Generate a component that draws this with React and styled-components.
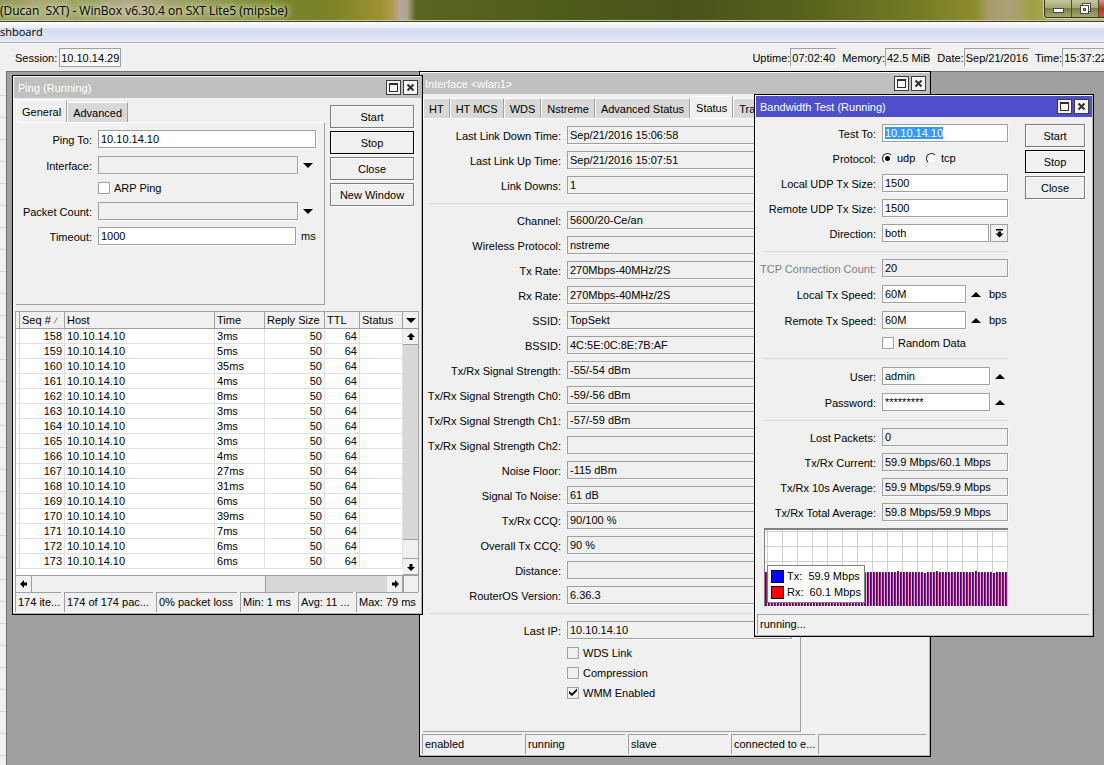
import React, { useEffect, useId, useRef } from 'react';
import styled, { createGlobalStyle, css } from 'styled-components';

const GlobalStyle = createGlobalStyle`
  * {
    box-sizing: border-box;
  }

  body {
    margin: 0;
    overflow: hidden;
    background: #a0a0a0;
  }

  body, button, input, select {
    font-family: "Liberation Sans", Arial, sans-serif;
    font-size: 11px;
    line-height: 14px;
    color: #000;
  }

  ::selection {
    background: #3399ff;
    color: #fff;
  }
`;

const Page = styled.div`
  display: flex;
  flex-direction: column;
  height: 100vh;
  overflow: hidden;
`;

const TitleBar = styled.header`
  display: flex;
  justify-content: space-between;
  flex: none;
  height: 22px;
  border-bottom: 1px solid #3c3f24;
  box-shadow: inset 0 -1px 0 #c3c9a0;
  background: linear-gradient(
    90deg,
    #8b9450 0,
    #a9a878 40px,
    #98a05c 90px,
    #b3a98a 125px,
    #939c56 200px,
    #78842c 285px,
    #7c8227 330px,
    #9c912f 380px,
    #b09a4c 392px,
    #b8a79c 400px,
    #b3a492 407px,
    #5a6420 416px,
    #4f5d1a 560px,
    #48531a 680px,
    #57611c 800px,
    #757b24 920px,
    #8d8c2c 975px,
    #a99b70 990px,
    #aba276 1010px,
    #a0a048 1030px,
    #b5b78c 100%
  );
`;

const AppTitle = styled.h1`
  margin: 0;
  font-family: "Open Sans", sans-serif;
  font-size: 12px;
  font-weight: 400;
  line-height: 21px;
  white-space: pre;
  text-shadow: 0 0 5px #e4e6c8, 0 0 8px #d8dcb4, 0 0 10px #d8dcb4;
`;

const CaptionButtons = styled.div`
  display: flex;
  width: 60px;
  height: 18px;
  overflow: hidden;
  border: 1px solid #33361c;
  border-top: 0;
  border-right: 0;
  border-bottom-left-radius: 4px;
  box-shadow: 0 0 0 1px #d3d5a8;
`;

const CaptionButton = styled.button`
  display: flex;
  align-items: center;
  justify-content: center;
  flex: none;
  width: 27px;
  padding: 0;
  border: 0;
  border-right: 1px solid #4c4e30;
  background: ${({ $close }) =>
    $close
      ? 'linear-gradient(#d8968a, #b03a24 50%, #c8583c)'
      : 'linear-gradient(#c4c69c, #a6a878 45%, #7c7f48 50%, #a3a670)'};
`;

const MenuBar = styled.nav`
  display: flex;
  flex: none;
  height: 21px;
  border-bottom: 1px solid #a3a8b5;
  background: linear-gradient(#fdfdff 0, #eceff8 30%, #d5dbee 35%, #dfe5f4 90%, #f4f5fa 100%);
`;

const MenuLink = styled.a`
  color: #000;
  font-family: "Open Sans", sans-serif;
  font-size: 11px;
  line-height: 20px;
  text-decoration: none;
`;

const Toolbar = styled.div`
  display: flex;
  align-items: center;
  justify-content: space-between;
  flex: none;
  height: 28px;
  padding-left: 15px;
  border-top: 1px solid #fff;
  background: #f0f0f0;
`;

const ToolbarGroup = styled.div`
  display: flex;
  gap: 5px;
  margin-right: ${({ $bleed }) => ($bleed ? '-5px' : 0)};
`;

const Readout = styled.div`
  display: flex;
  align-items: center;
  gap: ${({ $boxed }) => ($boxed ? '2px' : 0)};
  white-space: nowrap;
`;

const ReadoutValue = styled.output`
  height: 19px;
  padding: 1px;
  border: 1px solid #a0a0a0;
  border-right-color: ${({ $boxed }) => ($boxed ? '#a0a0a0' : '#fff')};
  border-bottom-color: ${({ $boxed }) => ($boxed ? '#a0a0a0' : '#fff')};
  background: ${({ $boxed }) => ($boxed ? '#f8f8f8' : '#f0f0f0')};
  line-height: 16px;
`;

const Workspace = styled.main`
  display: flex;
  flex: 1;
  min-height: 0;
`;

const Sidebar = styled.aside`
  flex: none;
  width: 6px;
  background: repeating-linear-gradient(#f0f0f0 0, #f0f0f0 21px, #d8d8d8 21px, #d8d8d8 22px) 0 3px;
`;

const Desktop = styled.div`
  position: relative;
  flex: 1;
  overflow: hidden;
  background: #a0a0a0;
  box-shadow: inset 1px 1px 0 #727272;
`;

const Frame = styled.section`
  position: absolute;
  left: ${({ $x }) => $x}px;
  top: ${({ $y }) => $y}px;
  display: flex;
  flex-direction: column;
  width: ${({ $width }) => $width}px;
  padding: 1px;
  border: 1px solid #000;
  background: #f0f0f0;
  box-shadow: inset -1px -1px 0 #b4b4b4, inset 1px 1px 0 #fafafa;
`;

const FrameTitle = styled.div`
  display: flex;
  align-items: center;
  gap: 2px;
  height: 21px;
  padding: 0 3px 0 4px;
  background: ${({ $active }) => ($active ? '#4f4fcc' : '#c0c0c0')};
  color: #fff;
`;

const FrameName = styled.h2`
  flex: 1;
  margin: 0;
  font-size: 11px;
  font-weight: 400;
  line-height: 16px;
`;

const FrameButton = styled.button`
  display: flex;
  align-items: center;
  justify-content: center;
  width: 15px;
  height: 15px;
  padding: 0;
  border: 1px solid #3c3c3c;
  background: #f4f4f4;
`;

const FrameBody = styled.div`
  display: flex;
  padding-left: 2px;
`;

const Main = styled.div`
  flex: 1;
  min-width: 0;
`;

const Tabs = styled.div`
  display: flex;
  align-items: flex-end;
  height: 24px;
  overflow: hidden;
`;

const Tab = styled.button`
  flex: none;
  height: ${({ $active }) => ($active ? '22px' : '20px')};
  padding: 0 5px;
  border: 1px solid #fff;
  border-width: 1px 1px 0;
  border-right-color: #a0a0a0;
  background: ${({ $active }) => ($active ? '#f0f0f0' : '#d8d8d8')};
  white-space: nowrap;
`;

const Panel = styled.div`
  min-height: ${({ $height }) => $height}px;
  padding-right: 8px;
  border: 1px solid #fff;
  border-left: 0;
  border-right-color: #a0a0a0;
  border-bottom-color: #a0a0a0;
`;

const ButtonColumn = styled.div`
  display: flex;
  flex-direction: column;
  flex: none;
  gap: 3px;
  width: ${({ $width }) => $width}px;
  padding: 7px 7px 0 ${({ $gutter }) => $gutter}px;
`;

const PushButton = styled.button`
  height: 23px;
  padding: 0;
  border: 1px solid ${({ $default }) => ($default ? '#000' : '#7c7c7c')};
  background: #f0f0f0;
  box-shadow: 1px 1px 0 #fff, inset 1px 1px 0 #fafafa;
`;

const Row = styled.div`
  display: grid;
  grid-template-columns: ${({ $label }) => $label}px minmax(0, 1fr);
  column-gap: 6px;
  align-items: center;
  height: ${({ $short }) => ($short ? '13px' : '18px')};
  margin-top: ${({ $loose }) => ($loose ? '8px' : '7px')};
`;

const RowLabel = styled.label`
  padding-top: 1px;
  color: ${({ $dim }) => ($dim ? '#808080' : '#000')};
  text-align: right;
  white-space: nowrap;
`;

const Control = styled.div`
  grid-column: 2;
  display: flex;
  align-items: center;
`;

const fieldBox = css`
  flex: 1;
  min-width: 0;
  height: 18px;
  margin: 0;
  padding: 0 2px;
  border: 1px solid #a0a0a0;
  border-radius: 0;
  outline: none;
  box-shadow: 1px 1px 0 #fafafa;
`;

const TextBox = styled.input`
  ${fieldBox}
  background: ${({ $flat }) => ($flat ? '#f0f0f0' : '#fff')};
`;

const SelectBox = styled.select`
  ${fieldBox}
  appearance: none;
  background: #fff;
`;

const DropButton = styled.button`
  display: flex;
  align-items: center;
  justify-content: center;
  width: 18px;
  height: 18px;
  margin-left: 1px;
  padding: 0;
  border: 1px solid #a0a0a0;
  background: #f0f0f0;
`;

const Trail = styled.div`
  display: flex;
  align-items: center;
  flex: none;
  gap: 8px;
  width: ${({ $width }) => $width}px;
  padding-left: 5px;
`;

const ArrowButton = styled.button`
  display: flex;
  padding: 0;
  border: 0;
  background: none;
`;

const CheckLabel = styled.label`
  position: relative;
  display: flex;
  align-items: center;
  gap: 4px;
  height: 13px;
  white-space: nowrap;

  svg {
    position: absolute;
    left: 2px;
    top: 2px;
  }
`;

const CheckInput = styled.input`
  appearance: none;
  width: 12px;
  height: 12px;
  margin: 0;
  border: 1px solid #a0a0a0;
  background: ${({ $flat }) => ($flat ? '#f0f0f0' : '#fff')};
  box-shadow: 1px 1px 0 #fafafa;
`;

const RadioLabel = styled.label`
  display: flex;
  align-items: center;
  gap: 4px;
  width: 44px;
`;

const RadioInput = styled.input`
  appearance: none;
  width: 11px;
  height: 11px;
  margin: 0;
  border: 1px solid #202020;
  border-right-color: #e4e4e4;
  border-bottom-color: #e4e4e4;
  border-radius: 50%;
  background: #fff;

  &:checked {
    background: radial-gradient(circle, #000 2px, #fff 3px);
  }
`;

const Separator = styled.hr`
  height: 1px;
  margin: 9px 0 0 6px;
  border: 0;
  background: #d6d6d6;
`;

const StatusBar = styled.footer`
  display: grid;
  grid-template-columns: ${({ $columns }) => $columns};
  gap: 3px;
  padding: 0 3px 1px 1px;
  margin-top: ${({ $gap }) => $gap}px;
`;

const StatusCell = styled.span`
  height: 20px;
  padding: 2px 0 0 2px;
  border-top: 1px solid #a0a0a0;
  border-left: 1px solid #a0a0a0;
  overflow: hidden;
  white-space: nowrap;
`;

const ListFrame = styled.div`
  display: grid;
  grid-template-columns: 1fr 15px;
  margin: 6px 2px 0 1px;
  border: 1px solid #a0a0a0;
  border-bottom: 0;
  background: #fff;
`;

const List = styled.table`
  width: 100%;
  margin-bottom: 6px;
  table-layout: fixed;
  border-collapse: separate;
  border-spacing: 0;
`;

const HeadCell = styled.th`
  height: 17px;
  padding: 0 2px;
  border-right: 1px solid #a0a0a0;
  border-bottom: 1px solid #a0a0a0;
  background: #f0f0f0;
  font-weight: 400;
  text-align: left;
  white-space: nowrap;
`;

const Cell = styled.td`
  height: 15px;
  padding: 0 2px;
  border-right: 1px solid #e0e0e0;
  border-bottom: 1px solid #e0e0e0;
  text-align: ${({ $right }) => ($right ? 'right' : 'left')};
  white-space: nowrap;
`;

const SideRail = styled.div`
  display: flex;
  flex-direction: column;
  border-left: 0;
  background: #d8d8d8;
`;

const BottomRail = styled.div`
  display: flex;
  height: 17px;
  border-top: 1px solid #a0a0a0;
  background: #d8d8d8;
`;

const RailButton = styled.button`
  display: flex;
  align-items: center;
  justify-content: center;
  flex: none;
  width: ${({ $wide }) => ($wide ? '16px' : '15px')};
  height: ${({ $head }) => ($head ? '17px' : '16px')};
  padding: 0;
  border: 0;
  border-right: ${({ $wide }) => ($wide ? '1px solid #a0a0a0' : '0')};
  border-bottom: ${({ $wide }) => ($wide ? '0' : '1px solid #a0a0a0')};
  background: #f0f0f0;
`;

const RailThumb = styled.div`
  background: #f0f0f0;
  border: 0 solid #a0a0a0;
  ${({ $horizontal }) =>
    $horizontal
      ? css`
          width: 234px;
          margin-right: auto;
          border-right-width: 1px;
        `
      : css`
          height: 20px;
          margin-top: auto;
          border-width: 1px 0;
        `}
`;

const Corner = styled.div`
  border-top: 1px solid #a0a0a0;
  border-left: 1px solid #a0a0a0;
  background: #f0f0f0;
`;

const Graph = styled.div`
  position: relative;
  height: 79px;
  margin: 7px 0 0 6px;
  border: 1px solid #808080;
  border-top-width: 2px;
  border-right: 0;
  border-bottom-color: #fff;
  background: #fff;

  > svg {
    display: block;
    width: 100%;
    height: 100%;
  }
`;

const Legend = styled.div`
  position: absolute;
  left: 2px;
  bottom: 3px;
  display: flex;
  flex-direction: column;
  gap: 2px;
  width: 98px;
  padding: 3px;
  border: 1px solid #808080;
  background: #fff;
`;

const LegendItem = styled.div`
  display: flex;
  align-items: center;
  gap: 3px;
  height: 14px;
  white-space: pre;
`;

const Swatch = styled.span`
  flex: none;
  width: 13px;
  height: 13px;
  border: 1px solid #000;
  background: ${({ $color }) => $color};
`;

const MaximizeIcon = () => (
  <svg width="9" height="9" shapeRendering="crispEdges" aria-hidden="true">
    <path d="M0 0h9v9H0zM1 2v6h7V2z" fill="#303030" fillRule="evenodd" />
  </svg>
);

const CloseIcon = () => (
  <svg width="9" height="9" viewBox="0 0 9 9" aria-hidden="true">
    <path d="M1.5 1.5l6 6M7.5 1.5l-6 6" stroke="#303030" strokeWidth="2" />
  </svg>
);

const Triangle = ({ up }) => (
  <svg width="10" height="5" viewBox="0 0 10 5" aria-hidden="true">
    <path d={up ? 'M0 5L5 0l5 5z' : 'M0 0h10L5 5z'} fill="#000" />
  </svg>
);

const turns = { up: 0, right: 90, down: 180, left: 270 };

const ScrollArrow = ({ to }) => (
  <svg width="8" height="8" viewBox="0 0 8 8" aria-hidden="true">
    <path d="M4 0l4 4H5.500v3h-3V4H0z" fill="#000" transform={`rotate(${turns[to]} 4 4)`} />
  </svg>
);

const DropIcon = () => (
  <svg width="9" height="9" viewBox="0 0 9 9" aria-hidden="true">
    <path d="M1 0h7v1.500H1zM3 2.500h3v2h2.500L4.500 8.500 .5 4.500H3z" fill="#000" />
  </svg>
);

function Field({ label, value, labelWidth, flat, dim, loose, type = 'text', inputRef, children }) {
  const id = useId();
  return (
    <Row $label={labelWidth} $loose={loose}>
      <RowLabel htmlFor={id} $dim={dim}>{label}:</RowLabel>
      <Control>
        <TextBox id={id} ref={inputRef} type={type} defaultValue={value} readOnly={flat} $flat={flat} />
        {children}
      </Control>
    </Row>
  );
}

function Check({ label, labelWidth, flat, checked }) {
  return (
    <Row $label={labelWidth} $short>
      <Control>
        <CheckLabel>
          <CheckInput type="checkbox" defaultChecked={checked} $flat={flat} />
          {checked && (
            <svg width="8" height="8" viewBox="0 0 8 8" aria-hidden="true">
              <path d="M0 3l3 2.500L8 .5V3L3 8 0 5.500z" fill="#000" />
            </svg>
          )}
          {label}
        </CheckLabel>
      </Control>
    </Row>
  );
}

function Window({ title, x, y, width, active, children }) {
  return (
    <Frame $x={x} $y={y} $width={width}>
      <FrameTitle $active={active}>
        <FrameName>{title}</FrameName>
        <FrameButton aria-label="Maximize"><MaximizeIcon /></FrameButton>
        <FrameButton aria-label="Close window"><CloseIcon /></FrameButton>
      </FrameTitle>
      {children}
    </Frame>
  );
}

const interfaceTabs = ['HT', 'HT MCS', 'WDS', 'Nstreme', 'Advanced Status', 'Status', 'Traffic'];

const linkFields = [
  ['Last Link Down Time', 'Sep/21/2016 15:06:58'],
  ['Last Link Up Time', 'Sep/21/2016 15:07:51'],
  ['Link Downs', '1'],
];

const radioFields = [
  ['Channel', '5600/20-Ce/an'],
  ['Wireless Protocol', 'nstreme'],
  ['Tx Rate', '270Mbps-40MHz/2S'],
  ['Rx Rate', '270Mbps-40MHz/2S'],
  ['SSID', 'TopSekt'],
  ['BSSID', '4C:5E:0C:8E:7B:AF'],
  ['Tx/Rx Signal Strength', '-55/-54 dBm'],
  ['Tx/Rx Signal Strength Ch0', '-59/-56 dBm'],
  ['Tx/Rx Signal Strength Ch1', '-57/-59 dBm'],
  ['Tx/Rx Signal Strength Ch2', ''],
  ['Noise Floor', '-115 dBm'],
  ['Signal To Noise', '61 dB'],
  ['Tx/Rx CCQ', '90/100 %'],
  ['Overall Tx CCQ', '90 %'],
  ['Distance', ''],
  ['RouterOS Version', '6.36.3'],
];

function InterfaceWindow() {
  const renderField = ([label, value]) => (
    <Field key={label} label={label} value={value} labelWidth={138} flat />
  );

  return (
    <Window title="Interface <wlan1>" x={413} y={0} width={512}>
      <FrameBody>
        <Main>
          <Tabs>
            {interfaceTabs.map((tab) => (
              <Tab key={tab} $active={tab === 'Status'}>{tab}</Tab>
            ))}
          </Tabs>
          <Panel $height={614}>
            {linkFields.map(renderField)}
            <Separator />
            {radioFields.map(renderField)}
            <Separator />
            <Field label="Last IP" value="10.10.14.10" labelWidth={138} flat />
            <Check label="WDS Link" labelWidth={138} flat />
            <Check label="Compression" labelWidth={138} flat />
            <Check label="WMM Enabled" labelWidth={138} flat checked />
          </Panel>
        </Main>
        <ButtonColumn $width={128} $gutter={5} />
      </FrameBody>
      <StatusBar $gap={2} $columns="100px 100px 100px 84px 1fr">
        <StatusCell>enabled</StatusCell>
        <StatusCell>running</StatusCell>
        <StatusCell>slave</StatusCell>
        <StatusCell>connected to e...</StatusCell>
        <StatusCell />
      </StatusBar>
    </Window>
  );
}

const columns = [
  ['', 4],
  ['Seq #', 45],
  ['Host', 150],
  ['Time', 50],
  ['Reply Size', 60],
  ['TTL', 35],
  ['Status', 43],
];

const pingTimes = [3, 5, 35, 4, 8, 3, 3, 3, 4, 27, 31, 6, 39, 7, 6, 6];

function PingWindow() {
  return (
    <Window title="Ping (Running)" x={6} y={4} width={411}>
      <FrameBody>
        <Main>
          <Tabs>
            <Tab $active>General</Tab>
            <Tab>Advanced</Tab>
          </Tabs>
          <Panel $height={183}>
            <Field label="Ping To" value="10.10.14.10" labelWidth={76} />
            <Field label="Interface" value="" labelWidth={76} flat loose>
              <Trail $width={18}><ArrowButton aria-label="Choose interface"><Triangle /></ArrowButton></Trail>
            </Field>
            <Check label="ARP Ping" labelWidth={76} />
            <Field label="Packet Count" value="" labelWidth={76} flat loose>
              <Trail $width={18}><ArrowButton aria-label="Set packet count"><Triangle /></ArrowButton></Trail>
            </Field>
            <Field label="Timeout" value="1000" labelWidth={76}>
              <Trail $width={20}>ms</Trail>
            </Field>
          </Panel>
        </Main>
        <ButtonColumn $width={96} $gutter={5}>
          <PushButton>Start</PushButton>
          <PushButton $default>Stop</PushButton>
          <PushButton>Close</PushButton>
          <PushButton>New Window</PushButton>
        </ButtonColumn>
      </FrameBody>
      <ListFrame>
        <List>
          <colgroup>
            {columns.map(([name, width]) => (
              <col key={name} width={width} />
            ))}
          </colgroup>
          <thead>
            <tr>
              {columns.map(([name]) => (
                <HeadCell key={name}>
                  {name}
                  {name === 'Seq #' && (
                    <svg width="8" height="7" viewBox="0 0 8 7" aria-hidden="true">
                      <path d="M3 6.500L6.500 .5" stroke="#808080" />
                    </svg>
                  )}
                </HeadCell>
              ))}
            </tr>
          </thead>
          <tbody>
            {pingTimes.map((time, i) => (
              <tr key={i}>
                <Cell />
                <Cell $right>{158 + i}</Cell>
                <Cell>10.10.14.10</Cell>
                <Cell>{time}ms</Cell>
                <Cell $right>50</Cell>
                <Cell $right>64</Cell>
                <Cell />
              </tr>
            ))}
          </tbody>
        </List>
        <SideRail>
          <RailButton $head aria-label="Choose columns"><Triangle /></RailButton>
          <RailButton aria-label="Scroll up"><ScrollArrow to="up" /></RailButton>
          <RailThumb />
          <RailButton aria-label="Scroll down"><ScrollArrow to="down" /></RailButton>
        </SideRail>
        <BottomRail>
          <RailButton $wide aria-label="Scroll left"><ScrollArrow to="left" /></RailButton>
          <RailThumb $horizontal />
          <RailButton $wide aria-label="Scroll right"><ScrollArrow to="right" /></RailButton>
        </BottomRail>
        <Corner />
      </ListFrame>
      <StatusBar $gap={0} $columns="46px 89px 81px 55px 55px 1fr">
        <StatusCell>174 ite...</StatusCell>
        <StatusCell>174 of 174 pac...</StatusCell>
        <StatusCell>0% packet loss</StatusCell>
        <StatusCell>Min: 1 ms</StatusCell>
        <StatusCell>Avg: 11 ...</StatusCell>
        <StatusCell>Max: 79 ms</StatusCell>
      </StatusBar>
    </Window>
  );
}

// a few samples sit a pixel above or below the steady level
const sampleTop = (i) => (i % 23 === 7 ? 43 : i % 13 === 5 ? 41 : 42);

function TrafficGraph() {
  return (
    <Graph>
      <svg shapeRendering="crispEdges" aria-hidden="true">
        {Array.from({ length: 17 }, (_, i) => (
          <rect key={`v${i}`} x={2 + i * 15} y="0" width="1" height="76" fill="#d0d0d0" />
        ))}
        {[1, 16, 31].map((y) => (
          <rect key={`h${y}`} x="0" y={y} width="244" height="1" fill="#d0d0d0" />
        ))}
        {Array.from({ length: 82 }, (_, i) => (
          <React.Fragment key={i}>
            <rect x={i * 3} y={sampleTop(i)} width="1" height="40" fill="#400c68" />
            <rect x={i * 3 + 1} y={sampleTop(i)} width="1" height="40" fill="#a0107c" />
            <rect x={i * 3 + 2} y={43} width="1" height="40" fill={i % 5 === 2 ? '#f0a0a8' : '#dcb4e0'} />
          </React.Fragment>
        ))}
      </svg>
      <Legend>
        <LegendItem><Swatch $color="#0000ff" />Tx:  59.9 Mbps</LegendItem>
        <LegendItem><Swatch $color="#ff0000" />Rx:  60.1 Mbps</LegendItem>
      </Legend>
    </Graph>
  );
}

function BandwidthWindow() {
  const targetRef = useRef(null);
  const directionId = useId();

  useEffect(() => {
    targetRef.current.focus();
    targetRef.current.select();
  }, []);

  return (
    <Window title="Bandwidth Test (Running)" x={748} y={23} width={340} active>
      <FrameBody>
        <Main>
          <Field label="Test To" value="10.10.14.10" labelWidth={118} inputRef={targetRef} />
          <Row $label={118}>
            <RowLabel as="span">Protocol:</RowLabel>
            <Control role="radiogroup" aria-label="Protocol">
              <RadioLabel><RadioInput type="radio" name="protocol" defaultChecked />udp</RadioLabel>
              <RadioLabel><RadioInput type="radio" name="protocol" />tcp</RadioLabel>
            </Control>
          </Row>
          <Field label="Local UDP Tx Size" value="1500" labelWidth={118} />
          <Field label="Remote UDP Tx Size" value="1500" labelWidth={118} />
          <Row $label={118}>
            <RowLabel htmlFor={directionId}>Direction:</RowLabel>
            <Control>
              <SelectBox id={directionId} defaultValue="both">
                <option>both</option>
              </SelectBox>
              <DropButton aria-label="Choose direction"><DropIcon /></DropButton>
            </Control>
          </Row>
          <Separator />
          <Field label="TCP Connection Count" value="20" labelWidth={118} flat dim />
          <Field label="Local Tx Speed" value="60M" labelWidth={118} loose>
            <Trail $width={42}><ArrowButton aria-label="Clear local speed"><Triangle up /></ArrowButton>bps</Trail>
          </Field>
          <Field label="Remote Tx Speed" value="60M" labelWidth={118} loose>
            <Trail $width={42}><ArrowButton aria-label="Clear remote speed"><Triangle up /></ArrowButton>bps</Trail>
          </Field>
          <Check label="Random Data" labelWidth={118} />
          <Separator />
          <Field label="User" value="admin" labelWidth={118} loose>
            <Trail $width={18}><ArrowButton aria-label="Clear user"><Triangle up /></ArrowButton></Trail>
          </Field>
          <Field label="Password" value="*********" labelWidth={118} loose>
            <Trail $width={18}><ArrowButton aria-label="Clear password"><Triangle up /></ArrowButton></Trail>
          </Field>
          <Separator />
          <Field label="Lost Packets" value="0" labelWidth={118} flat />
          <Field label="Tx/Rx Current" value="59.9 Mbps/60.1 Mbps" labelWidth={118} flat />
          <Field label="Tx/Rx 10s Average" value="59.9 Mbps/59.9 Mbps" labelWidth={118} flat />
          <Field label="Tx/Rx Total Average" value="59.8 Mbps/59.9 Mbps" labelWidth={118} flat />
          <TrafficGraph />
        </Main>
        <ButtonColumn $width={84} $gutter={17}>
          <PushButton>Start</PushButton>
          <PushButton $default>Stop</PushButton>
          <PushButton>Close</PushButton>
        </ButtonColumn>
      </FrameBody>
      <StatusBar $gap={7} $columns="1fr">
        <StatusCell>running...</StatusCell>
      </StatusBar>
    </Window>
  );
}

const systemReadouts = [
  ['Uptime', '07:02:40'],
  ['Memory', '42.5 MiB'],
  ['Date', 'Sep/21/2016'],
  ['Time', '15:37:22'],
];

function App() {
  return (
    <>
      <GlobalStyle />
      <Page>
        <TitleBar>
          <AppTitle>{'(Ducan  SXT) - WinBox v6.30.4 on SXT Lite5 (mipsbe)'}</AppTitle>
          <CaptionButtons>
            <CaptionButton aria-label="Minimize">
              <svg width="13" height="14" aria-hidden="true">
                <rect x="1.500" y="6.500" width="10" height="4" fill="#fff" stroke="#4a4a4a" />
              </svg>
            </CaptionButton>
            <CaptionButton aria-label="Restore">
              <svg width="13" height="14" aria-hidden="true">
                <rect x="3.500" y="1.500" width="8" height="8" fill="#fff" stroke="#4a4a4a" />
                <rect x="1.500" y="3.500" width="8" height="8" fill="#fff" stroke="#4a4a4a" />
                <rect x="4.500" y="6.500" width="2" height="2" fill="#a6a878" stroke="#4a4a4a" />
              </svg>
            </CaptionButton>
            <CaptionButton $close aria-label="Close" />
          </CaptionButtons>
        </TitleBar>
        <MenuBar>
          <MenuLink href="#dashboard">shboard</MenuLink>
        </MenuBar>
        <Toolbar>
          <ToolbarGroup>
            <Readout $boxed>
              <span>Session:</span>
              <ReadoutValue $boxed>10.10.14.29</ReadoutValue>
            </Readout>
          </ToolbarGroup>
          <ToolbarGroup $bleed>
            {systemReadouts.map(([label, value]) => (
              <Readout key={label}>
                <span>{label}:</span>
                <ReadoutValue>{value}</ReadoutValue>
              </Readout>
            ))}
          </ToolbarGroup>
        </Toolbar>
        <Workspace>
          <Sidebar />
          <Desktop>
            <InterfaceWindow />
            <PingWindow />
            <BandwidthWindow />
          </Desktop>
        </Workspace>
      </Page>
    </>
  );
}

export default App;
